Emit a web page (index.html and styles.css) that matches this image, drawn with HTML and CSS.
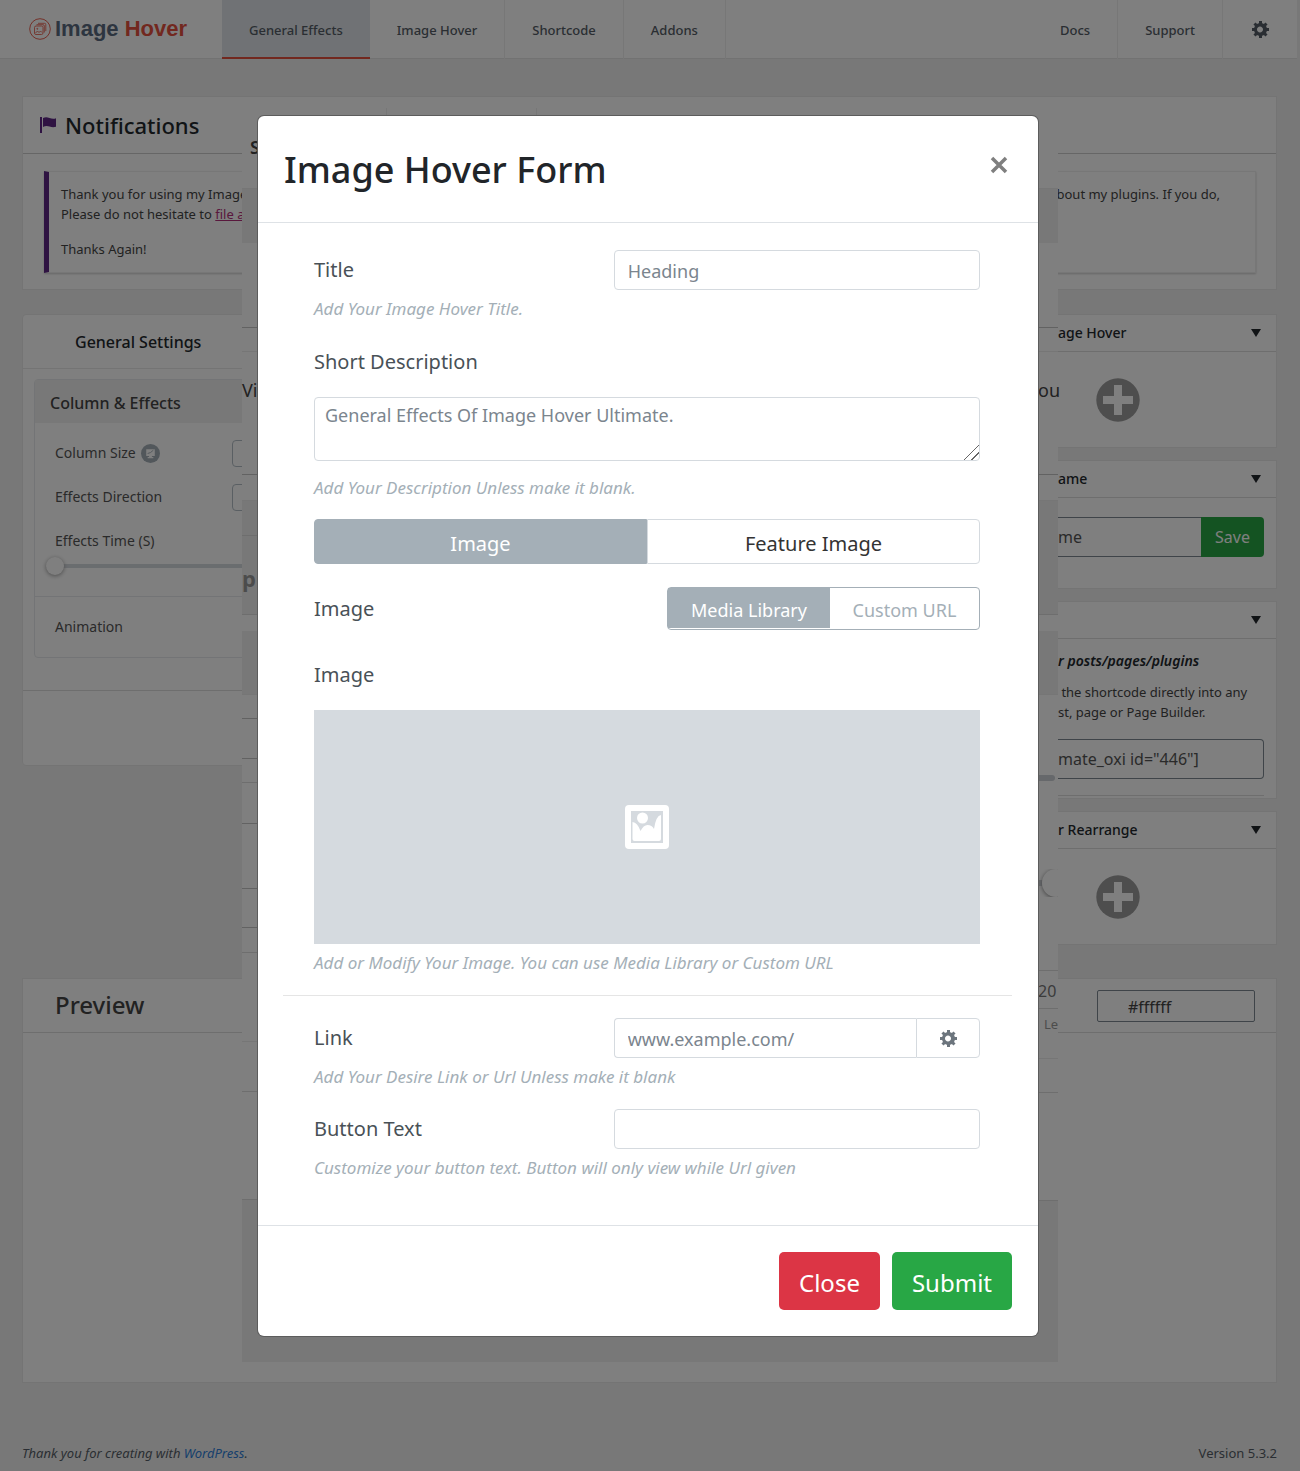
FILE: index.html
```html
<!DOCTYPE html>
<html lang="en">
<head>
<meta charset="utf-8">
<meta name="viewport" content="width=device-width, initial-scale=1">
<title>Image Hover</title>
<link rel="stylesheet" href="styles.css">
</head>
<body>
<svg class="defs" aria-hidden="true">
  <symbol id="gear" viewBox="0 1 18 19"><path d="M18 12h-2.180c-0.170 0.700-0.440 1.350-0.810 1.930l1.540 1.540-2.100 2.100-1.540-1.540c-0.580 0.360-1.230 0.630-1.910 0.790v2.180h-3v-2.180c-0.680-0.160-1.330-0.430-1.910-0.790l-1.540 1.540-2.120-2.120 1.540-1.540c-0.360-0.580-0.630-1.230-0.790-1.910h-2.180v-2.970h2.170c0.160-0.700 0.440-1.350 0.800-1.940l-1.540-1.540 2.100-2.100 1.540 1.540c0.600-0.370 1.240-0.640 1.930-0.810v-2.180h3v2.180c0.680 0.160 1.330 0.430 1.910 0.790l1.540-1.540 2.120 2.120-1.540 1.540c0.360 0.590 0.640 1.240 0.800 1.940h2.170v2.970zM9 13.500c1.660 0 3-1.340 3-3s-1.340-3-3-3-3 1.340-3 3 1.340 3 3 3z"/></symbol>
  <symbol id="plus" viewBox="0 0 44 44"><circle cx="22" cy="22" r="21.700" fill="#9c9c9c"/><path d="M18 7h8v11h11v8H26v11h-8V26H7v-8h11z" fill="#fff"/></symbol>
</svg>
<div class="page">
  <header class="topbar">
    <a class="logo" href="#">
      <svg class="logo-mark" viewBox="0 0 22 22" fill="none" stroke="#e5503f"><circle cx="11" cy="11" r="10.300" stroke-width=".9"/><g stroke-width=".8"><rect x="5.500" y="8" width="8.500" height="8.500" rx="1.500"/><path d="M7.500 6.700h6.500q1.300 0 1.300 1.300v6.500M9 5.300h6.500q1.300 0 1.300 1.300v6.500M6.500 15l2-2 1.500 1.500 1.500-1.500 1.500 1.500"/><circle cx="8.300" cy="10.800" r=".5"/></g></svg>
      <span class="logo-text">Image <b>Hover</b></span>
    </a>
    <nav class="nav">
      <a class="tab tab-active" href="#">General Effects</a>
      <a class="tab" href="#">Image Hover</a>
      <a class="tab" href="#">Shortcode</a>
      <a class="tab" href="#">Addons</a>
    </nav>
    <nav class="nav nav-end">
      <a class="tab" href="#">Docs</a>
      <a class="tab" href="#">Support</a>
      <a class="tab tab-last" href="#" aria-label="Settings"><svg class="gear"><use href="#gear"/></svg></a>
    </nav>
  </header>

  <main class="main">
    <section class="card">
      <h2 class="notif-title">
        <svg class="flag" viewBox="0 0 16 16" fill="#5e2785"><path d="M0 0h2v16H0zM3 1q3-1.500 6.500 0t6.500.3v8.400q-3 1-6.500-.2T3 10z"/></svg>
        Notifications
      </h2>
      <div class="notice">
        <p class="notice-line"><span>Thank you for using my Image</span><span class="notice-tail">bout my plugins. If you do,</span></p>
        <p>Please do not hesitate to <a class="notice-link" href="#">file a</a></p>
        <p class="notice-thanks">Thanks Again!</p>
      </div>
    </section>

    <div class="columns">
      <section class="card settings">
        <h3 class="settings-title">General Settings</h3>
        <div class="group">
          <h4 class="group-title">Column &amp; Effects</h4>
          <div class="group-body">
            <div class="setting"><label for="col">Column Size</label>
              <svg class="badge" viewBox="0 0 20 20"><circle cx="10" cy="10" r="10" fill="#a4afb7"/><path d="M5.500 5.500h9v7h-3v1.300h1.500V15H7v-1.200h1.500v-1.300h-3z" fill="#fff"/><path d="M7 10l3-1 3-2.500" stroke="#a4afb7" fill="none"/></svg>
              <input class="setting-box" id="col" type="text"></div>
            <div class="setting"><label for="dir">Effects Direction</label><input class="setting-box" id="dir" type="text"></div>
            <div class="setting"><label for="time">Effects Time (S)</label></div>
            <input class="range" id="time" type="range" min="0" max="100" value="0">
          </div>
          <div class="group-foot">Animation</div>
        </div>
        <div class="settings-foot"></div>
      </section>

      <aside class="side">
        <section class="card">
          <h3 class="side-title"><span>age Hover</span><i class="caret"></i></h3>
          <div class="side-add"><button class="plain" aria-label="Add"><svg class="plus"><use href="#plus"/></svg></button></div>
        </section>
        <section class="card">
          <h3 class="side-title"><span>ame</span><i class="caret"></i></h3>
          <div class="side-name"><input class="name-input" type="text" value="me" aria-label="Name"><button class="save">Save</button></div>
        </section>
        <section class="card">
          <h3 class="side-title"><span></span><i class="caret"></i></h3>
          <div class="side-code">
            <p class="code-head">r posts/pages/plugins</p>
            <p class="code-text">&nbsp;the shortcode directly into any<br>st, page or Page Builder.</p>
            <input class="code-input" type="text" value='mate_oxi id="446"]' aria-label="Shortcode">
            <hr class="code-rule">
          </div>
        </section>
        <section class="card">
          <h3 class="side-title"><span>r Rearrange</span><i class="caret"></i></h3>
          <div class="side-add"><button class="plain" aria-label="Rearrange"><svg class="plus"><use href="#plus"/></svg></button></div>
        </section>
      </aside>
    </div>

    <section class="card preview">
      <div class="preview-head">
        <h2 class="preview-title">Preview</h2>
        <input class="color-input" type="text" value="#ffffff" aria-label="Background colour">
      </div>
      <div class="preview-body"></div>
    </section>
  </main>

  <footer class="footer">
    <em>Thank you for creating with <a class="wp" href="#">WordPress</a>.</em>
    <span>Version 5.3.2</span>
  </footer>
</div>

<div class="under">
  <div class="under-top"><i></i><i></i></div>
  <div class="rails">
    <div class="rail">
      <div class="strip h73 line-soft big">S</div>
      <div class="strip h54 grey"></div>
      <div class="strip h85 line-dark"></div>
      <div class="strip h24 line-soft"></div>
      <div class="strip h123 line-dark word">Vi</div>
      <div class="strip h26 line-soft"></div>
      <div class="strip h35 grey line"></div>
      <div class="strip h79 grey line dim">p</div>
      <div class="strip h16"></div>
      <div class="strip h64 grey line-soft"></div>
      <div class="strip h24 line-dark"></div>
      <div class="strip h40 line-dark"></div>
      <div class="strip h24 line"></div>
      <div class="strip h41 line-dark"></div>
      <div class="strip h65 line-dark"></div>
      <div class="strip h39 line-dark"></div>
      <div class="strip h25 line"></div>
      <div class="strip h89 line-soft"></div>
      <div class="strip h50 line"></div>
      <div class="strip h108 line"></div>
      <div class="strip fill grey"></div>
    </div>
    <div class="rail rail-right">
      <div class="strip h73 line-soft"></div>
      <div class="strip h54 grey"></div>
      <div class="strip h85 line-dark"></div>
      <div class="strip h24 line-soft"></div>
      <div class="strip h123 line-dark word">ou</div>
      <div class="strip h26 line-soft"></div>
      <div class="strip h114 grey line"></div>
      <div class="strip h16"></div>
      <div class="strip h64 grey line-soft"></div>
      <div class="strip h80"></div>
      <div class="bar"></div>
      <div class="strip h88"></div>
      <div class="knob-row"><b></b><i></i></div>
      <div class="strip h74 line"></div>
      <div class="strip h38 line num">20</div>
      <div class="strip h50 line-soft unit">Le</div>
      <div class="strip h34 line"></div>
      <div class="strip h108 line"></div>
      <div class="strip fill grey"></div>
    </div>
  </div>
  <div class="under-foot grey"></div>
</div>

<div class="shade">
  <form class="modal" role="dialog" aria-labelledby="modal-title">
    <div class="modal-head">
      <h1 class="modal-title" id="modal-title">Image Hover Form</h1>
      <button class="plain close-x" type="button" aria-label="Close dialog"><svg class="x-icon" viewBox="0 0 18 18"><path d="M2 2l14 14M16 2L2 16" stroke="#7f7f7f" stroke-width="3.500"/></svg></button>
    </div>
    <div class="modal-body">
      <div class="row"><label for="title">Title</label><input class="field" id="title" type="text" placeholder="Heading"></div>
      <p class="help">Add Your Image Hover Title.</p>

      <label class="block-label" for="desc">Short Description</label>
      <textarea class="area" id="desc" placeholder="General Effects Of Image Hover Ultimate."></textarea>
      <p class="help help-area">Add Your Description Unless make it blank.</p>

      <div class="switch" role="group" aria-label="Image type">
        <button class="switch-item switch-on" type="button">Image</button>
        <button class="switch-item" type="button">Feature Image</button>
      </div>

      <div class="row row-source"><span>Image</span>
        <div class="source" role="group" aria-label="Image source">
          <button class="source-item source-on" type="button">Media Library</button>
          <button class="source-item" type="button">Custom URL</button>
        </div>
      </div>

      <div class="block-label picker-label">Image</div>
      <button class="picker" type="button" aria-label="Choose image">
        <svg class="pic-icon" viewBox="0 0 44 44"><rect width="44" height="44" rx="4" fill="#fff"/><path d="M6 6h32v32H6z" fill="#d5dadf"/><path d="M7.500 17q5 .5 8 9 3-6 7-6 4.500 0 6.500 4 2-13.500 7-14v24q0 2-2 2H9.500q-2 0-2-2z" fill="#fff"/><circle cx="17.500" cy="13" r="5.500" fill="#fff"/></svg>
      </button>
      <p class="help">Add or Modify Your Image. You can use Media Library or Custom URL</p>

      <hr class="rule">

      <div class="row"><label for="link">Link</label>
        <div class="link-group"><input class="link-input" id="link" type="text" placeholder="www.example.com/"><button class="link-opts" type="button" aria-label="Link options"><svg class="gear"><use href="#gear"/></svg></button></div>
      </div>
      <p class="help">Add Your Desire Link or Url Unless make it blank</p>

      <div class="row row-button"><label for="btn">Button Text</label><input class="field" id="btn" type="text"></div>
      <p class="help">Customize your button text. Button will only view while Url given</p>
    </div>
    <div class="modal-foot">
      <button class="btn btn-close" type="button">Close</button>
      <button class="btn btn-submit" type="submit">Submit</button>
    </div>
  </form>
</div>
</body>
</html>
```
FILE: styles.css
```css
* { box-sizing: border-box; }
body {
  margin: 0;
  position: relative;
  background: #f1f1f1;
  color: #444;
  font: 13px/20px "Noto Sans", "Open Sans", sans-serif;
}
h1, h2, h3, h4 { margin: 0; font-weight: 500; }
p { margin: 0; }
button, input, textarea { font-family: inherit; }
i { font-style: normal; }
.defs { display: none; }
.plain { border: 0; background: none; padding: 0; display: block; }
.gear { width: 18px; height: 19px; display: block; fill: currentColor; }

/* Top bar */
.topbar {
  display: flex;
  height: 59px;
  margin-right: 3px;
  background: #fff;
  border-bottom: 1px solid #e4e4e4;
}
.logo { display: flex; align-items: center; gap: 4px; width: 222px; padding-left: 29px; text-decoration: none; }
.logo-mark { width: 22px; height: 22px; }
.logo-text { font: bold 22px/28px "Liberation Sans", Arial, sans-serif; color: #5b6b80; }
.logo-text b { color: #e5503f; }
.nav { display: flex; }
.nav-end { margin-left: auto; }
.tab {
  display: flex;
  align-items: center;
  height: 59px;
  padding: 0 27px;
  border-right: 1px solid #eee;
  color: #555d66;
  font-weight: 500;
  text-decoration: none;
}
.tab-active { background: #e0e5ea; border-right: 0; border-bottom: 2px solid #e5503f; padding-top: 2px; }
.tab-last { border-right: 0; padding: 0 28px; }

/* Cards */
.main { padding: 37px 23px 0 22px; }
.card { background: #fff; border: 1px solid #e8e8e8; }
.notif-title {
  display: flex;
  align-items: center;
  gap: 9px;
  height: 57px;
  padding-left: 17px;
  border-bottom: 1px solid #ccc;
  color: #23282d;
  font-size: 22px;
}
.flag { width: 16px; height: 16px; }
.notice {
  margin: 17px 20px 16px 21px;
  padding: 12px 35px 13px 12px;
  border: 1px solid #eee;
  border-left: 5px solid #5e2785;
  box-shadow: 0 1px 2px #ccc;
}
.notice-line { display: flex; justify-content: space-between; }
.notice-thanks { margin-top: 15px; }
.notice-link { color: #b3307a; }

.columns { display: flex; justify-content: space-between; align-items: flex-start; margin-top: 24px; }
.settings { width: 400px; border-radius: 4px; }
.settings-title {
  height: 54px;
  padding-left: 52px;
  border-bottom: 1px solid #e8e8e8;
  color: #23282d;
  font-size: 16px;
  line-height: 54px;
}
.group { margin: 10px 11px 32px; border: 1px solid #e6e9ec; border-radius: 4px; }
.group-title { height: 43px; padding-left: 15px; background: #f1f1f1; color: #444; font-size: 16px; line-height: 46px; }
.group-body { padding: 8px 20px 0; height: 174px; border-bottom: 1px solid #e6e9ec; }
.setting { display: flex; align-items: center; height: 44px; color: #555; font-size: 14px; }
.badge { width: 19px; height: 19px; margin-left: 5px; }
.setting-box { margin-left: auto; width: 157px; height: 27px; border: 1px solid #b5bfc7; border-radius: 4px; background: #fff; }
.range { -webkit-appearance: none; appearance: none; display: block; width: 100%; height: 4px; margin: 1px -9px; background: #d5dadf; }
.range::-webkit-slider-thumb { -webkit-appearance: none; width: 18px; height: 18px; border-radius: 9px; background: #fff; box-shadow: 0 1px 4px #999; }
.group-foot { height: 60px; padding-left: 20px; color: #555; font-size: 14px; line-height: 60px; }
.settings-foot { height: 75px; border-top: 1px solid #ddd; }

.side { width: 219px; }
.side .card { border-left: 0; margin-bottom: 12px; }
.side .card:last-child { margin-bottom: 0; }
.side-title {
  display: flex;
  justify-content: space-between;
  align-items: center;
  height: 37px;
  padding-right: 15px;
  border-bottom: 1px solid #ddd;
  color: #23282d;
  font-size: 14px;
}
.caret { border: 5px solid transparent; border-top: 8px solid #23282d; border-bottom: 0; }
.side-add { height: 95px; padding: 26px 0 0 38px; }
.plus { width: 44px; height: 44px; display: block; }
.side-name { display: flex; height: 90px; padding: 19px 12px 31px 0; }
.name-input { flex: 1; min-width: 0; border: 1px solid #7e8993; border-width: 1px 0; padding: 0; background: #fff; color: #555; font-size: 16px; }
.save { width: 63px; border: 0; border-radius: 0 4px 4px 0; background: #28a745; color: #fff; font-size: 16px; }
.side-code { padding: 12px 12px 2px 0; }
.code-head { color: #23282d; font-style: italic; font-weight: 600; font-size: 14px; }
.code-text { margin: 11px 0 17px; }
.code-input { display: block; width: 100%; height: 40px; border: 1px solid #7e8993; border-left: 0; border-radius: 0 4px 4px 0; padding: 0; background: #fff; color: #555; font-size: 16px; }
.code-rule { margin: 16px 0 0; border: 0; border-top: 1px solid #ddd; }

.preview { margin-top: 33px; }
.preview-head { display: flex; justify-content: space-between; height: 54px; padding: 11px 21px 11px 32px; border-bottom: 1px solid #ddd; }
.preview-title { color: #444; font-size: 24px; line-height: 30px; }
.color-input { width: 158px; height: 32px; border: 1px solid #7e8993; border-radius: 2px; padding: 2px 0 0 30px; background: #fff; color: #444; font-size: 16px; }
.preview-body { height: 349px; }
.footer { display: flex; justify-content: space-between; padding: 60px 23px 10px 22px; color: #555d66; }
.wp { color: #2f7fd8; text-decoration: none; }

/* Panel showing behind the dialog */
.under { position: absolute; top: 108px; left: 242px; right: 242px; height: 1254px; display: flex; flex-direction: column; background: #fff; }
.under-top { display: flex; height: 8px; }
.under-top i { width: 145px; border-right: 1px solid #eee; }
.under-top i + i { width: 150px; }
.under-foot { height: 27px; }
.rails { display: flex; justify-content: space-between; flex: 1; }
.rail { display: flex; flex-direction: column; width: 18px; }
.rail-right { width: 20px; }
.strip { flex: none; color: #444; }
.grey { background: #f1f1f1; }
.line { border-bottom: 1px solid #ddd; }
.line-soft { border-bottom: 1px solid #ececec; }
.line-dark { border-bottom: 1px solid #c4c4c4; }
.h16 { height: 16px; } .h24 { height: 24px; } .h25 { height: 25px; } .h26 { height: 26px; }
.h34 { height: 34px; } .h35 { height: 35px; } .h38 { height: 38px; } .h39 { height: 39px; }
.h40 { height: 40px; } .h41 { height: 41px; } .h50 { height: 50px; } .h54 { height: 54px; }
.h64 { height: 64px; } .h65 { height: 65px; } .h73 { height: 73px; } .h74 { height: 74px; }
.h79 { height: 79px; } .h80 { height: 80px; } .h85 { height: 85px; } .h88 { height: 88px; }
.h89 { height: 89px; } .h108 { height: 108px; } .h114 { height: 114px; } .h123 { height: 123px; }
.fill { flex: 1; }
.big { padding-left: 8px; font-size: 18px; font-weight: 600; line-height: 62px; }
.word { font-size: 18px; line-height: 76px; }
.dim { color: #999; font-size: 22px; font-weight: 700; line-height: 84px; }
.num { color: #777; font-size: 16px; line-height: 40px; }
.unit { padding-left: 6px; color: #999; line-height: 30px; }
.bar { flex: none; width: 17px; height: 6px; border-radius: 0 3px 3px 0; background: #ccd0d6; }
.knob-row { flex: none; display: flex; align-items: center; height: 28px; overflow: hidden; }
.knob-row b { flex: none; width: 4px; height: 6px; background: #ccd0d6; }
.knob-row i { flex: none; width: 28px; height: 28px; border-radius: 14px; background: #fff; box-shadow: 0 1px 4px #888; }

/* Dialog */
.shade { position: absolute; inset: 0; padding: 116px 4px 0 0; background: rgba(0, 0, 0, .5); }
.modal { width: 60vw; min-width: 600px; margin: 0 auto; background: #fff; border-radius: 6px; box-shadow: 0 0 0 1px #5c5c5c; color: #495157; font-size: 20px; line-height: 30px; }
.modal-head { display: flex; justify-content: space-between; align-items: flex-start; padding: 29px 30px 27px 26px; border-bottom: 1px solid #dee2e6; }
.modal-title { color: #212529; font-size: 36px; line-height: 50px; }
.close-x { margin-top: 11px; }
.x-icon { width: 18px; height: 18px; display: block; }
.modal-body { padding: 27px 58px 45px 56px; }
.row { display: flex; justify-content: space-between; align-items: center; }
.field, .link-group { width: 55%; height: 40px; }
.field, .link-input, .link-opts, .area { border: 1px solid #d5dadf; border-radius: 4px; background: #fff; color: #6c757d; font-size: 18px; }
.field, .link-input { padding: 1px 13px 0; }
::placeholder { color: #7b858e; opacity: 1; }
.help { margin-top: 7px; color: #a4afb7; font-size: 17px; line-height: 24px; font-style: italic; }
.help-area { margin-top: 15px; }
.block-label { display: block; margin: 26px 0 20px; }
.area { display: block; width: 100%; height: 64px; padding: 4px 10px; line-height: 27px; }
.area::-webkit-scrollbar { width: 18px; height: 18px; }
.area::-webkit-resizer { background: linear-gradient(135deg, transparent 47%, #666 47%, #666 52%, transparent 52%, transparent 72%, #666 72%, #666 77%, transparent 77%); }
.switch { display: flex; height: 45px; margin-top: 19px; }
.switch-item { flex: 1; border: 1px solid #d5dadf; border-radius: 0 4px 4px 0; background: #fff; padding: 3px 0 0; color: #333; font-size: 20px; }
.switch-on { border-color: #a4afb7; border-radius: 4px 0 0 4px; background: #a4afb7; color: #fff; }
.row-source { margin-top: 23px; }
.source { display: flex; width: 313px; height: 43px; border: 1px solid #a4afb7; border-radius: 4px; padding-bottom: 1px; }
.source-item { flex: 1; border: 0; background: none; padding: 4px 0 0; color: #a4afb7; font-size: 18px; }
.source-on { flex: none; width: 162px; background: #a4afb7; color: #fff; }
.picker-label { margin-top: 30px; }
.picker { display: flex; align-items: center; justify-content: center; width: 100%; height: 234px; border: 0; background: #d5dadf; }
.pic-icon { width: 44px; height: 44px; }
.rule { margin: 20px -32px 22px -31px; border: 0; border-top: 1px solid #e5e5e5; }
.link-group { display: flex; }
.link-input { flex: 1; min-width: 0; border-radius: 4px 0 0 4px; border-right: 0; }
.link-opts { display: flex; align-items: center; justify-content: center; width: 64px; border-radius: 0 4px 4px 0; }
.row-button { margin-top: 20px; }
.modal-foot { display: flex; justify-content: flex-end; gap: 12px; padding: 26px; border-top: 1px solid #dee2e6; }
.btn { height: 58px; border: 0; border-radius: 5px; padding: 3px 20px 0; color: #fff; font-size: 24px; }
.btn-close { background: #dc3545; }
.btn-submit { background: #28a745; }
```
